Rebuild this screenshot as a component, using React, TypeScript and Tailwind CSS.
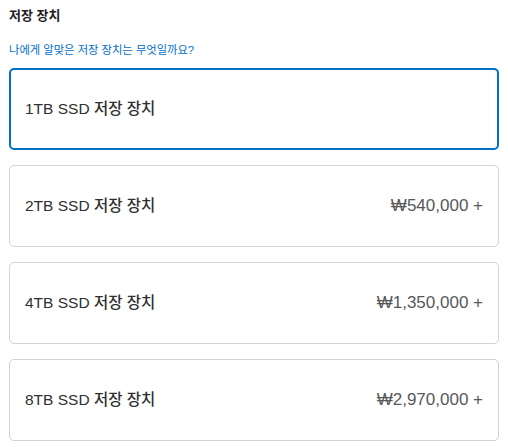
const options = [
  { id: '1tb', label: '1TB SSD 저장 장치', price: '' },
  { id: '2tb', label: '2TB SSD 저장 장치', price: '₩540,000 +' },
  { id: '4tb', label: '4TB SSD 저장 장치', price: '₩1,350,000 +' },
  { id: '8tb', label: '8TB SSD 저장 장치', price: '₩2,970,000 +' },
];

export default function App() {
  const selected = '1tb';

  return (
    <div
      className="w-[508px] h-[447px] bg-white px-[9px] pt-[6px]"
      style={{ fontFamily: '"Liberation Sans", "Noto Sans CJK KR", sans-serif' }}
    >
      {/* 제목 */}
      <h2 className="text-[13px] leading-[20px] font-bold text-[#1d1d1f]">저장 장치</h2>
      <a className="block mt-[16px] text-[11.3px] leading-[16px] text-[#0070c9]">
        나에게 알맞은 저장 장치는 무엇일까요?
      </a>

      {/* 옵션 목록 */}
      <div className="mt-[10px] w-[490px] flex flex-col gap-[15px]">
        {options.map((opt) => {
          const isSelected = opt.id === selected;
          return (
            <div
              key={opt.id}
              className={`h-[82px] rounded-[5px] flex items-center justify-between ${
                isSelected
                  ? 'border-2 border-[#0071c5] px-[14px]'
                  : 'border border-[#d2d2d7] px-[15px]'
              }`}
            >
              <span className="text-[15.5px] font-medium text-[#2f2f31]">{opt.label}</span>
              {opt.price && (
                <span className="text-[17px] text-[#58585b]">{opt.price}</span>
              )}
            </div>
          );
        })}
      </div>
    </div>
  );
}
